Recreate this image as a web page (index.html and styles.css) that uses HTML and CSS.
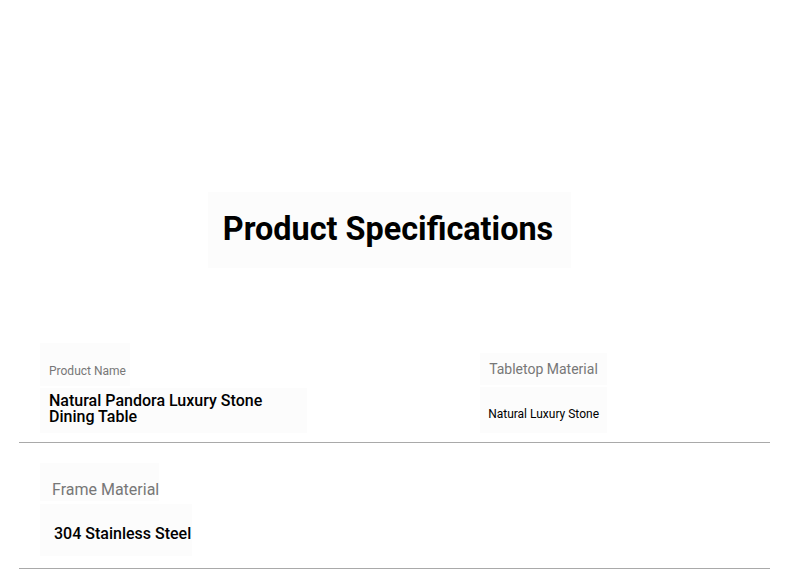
FILE: index.html
```html
<!DOCTYPE html>
<html>
<head>
<meta charset="utf-8">
<link rel="stylesheet" href="styles.css">
</head>
<body>
<div class="page">
  <header class="hero">
    <h1 class="title">Product Specifications</h1>
  </header>
  <section class="row row-first">
    <div class="cell cell-name">
      <div class="label label-name">Product Name</div>
      <div class="value value-name">Natural Pandora Luxury Stone<br>Dining Table</div>
    </div>
    <div class="cell cell-top">
      <div class="label label-top">Tabletop Material</div>
      <div class="value value-top">Natural Luxury Stone</div>
    </div>
  </section>
  <section class="row row-second">
    <div class="cell cell-frame">
      <div class="label label-frame">Frame Material</div>
      <div class="value value-frame">304 Stainless Steel</div>
    </div>
  </section>
</div>
</body>
</html>
```

FILE: styles.css
```css
* { box-sizing: border-box; }
html, body { margin: 0; padding: 0; background: #fff; }
body { font-family: Roboto, "Liberation Sans", sans-serif; color: #000; }

.page { padding: 0 20px 0 19px; }

.hero {
  padding-top: 192px;
  display: flex;
  justify-content: center;
  padding-right: 10px;
}
.title {
  margin: 0;
  font-size: 32.4px;
  font-weight: 700;
  line-height: 36px;
  padding: 19px 18px 21px 15px;
  background: #fcfcfc;
}

.row {
  display: flex;
  border-bottom: 1px solid #a9a9a9;
}
.row-first {
  margin-top: 75px;
  padding: 0 0 9px 21px;
  justify-content: space-between;
  align-items: flex-end;
  padding-right: 163px;
}
.row-second {
  padding: 20px 0 12px 21px;
}

.cell { display: flex; flex-direction: column; align-items: flex-start; }

.label { color: #777; background: #fcfcfc; }
.value { background: #fcfcfc; }

.cell-name { width: 267px; }
.label-name {
  font-size: 12px;
  line-height: 14px;
  padding: 21px 4px 8px 9px;
}
.value-name {
  align-self: stretch;
  font-size: 16px;
  font-weight: 500;
  line-height: 16px;
  padding: 5px 9px 8px 9px;
  margin-top: 2px;
}

.cell-top { align-items: stretch; }
.label-top {
  font-size: 14px;
  line-height: 16px;
  padding: 8px 9px 8px 9px;
}
.value-top {
  font-size: 12px;
  line-height: 14px;
  padding: 20px 8px 12px 8px;
  margin-top: 2px;
}

.label-frame {
  font-size: 16px;
  line-height: 18px;
  padding: 18px 0 2px 12px;
}
.value-frame {
  font-size: 16px;
  font-weight: 500;
  line-height: 19px;
  padding: 20px 1px 13px 14px;
  margin-top: 3px;
}
```
